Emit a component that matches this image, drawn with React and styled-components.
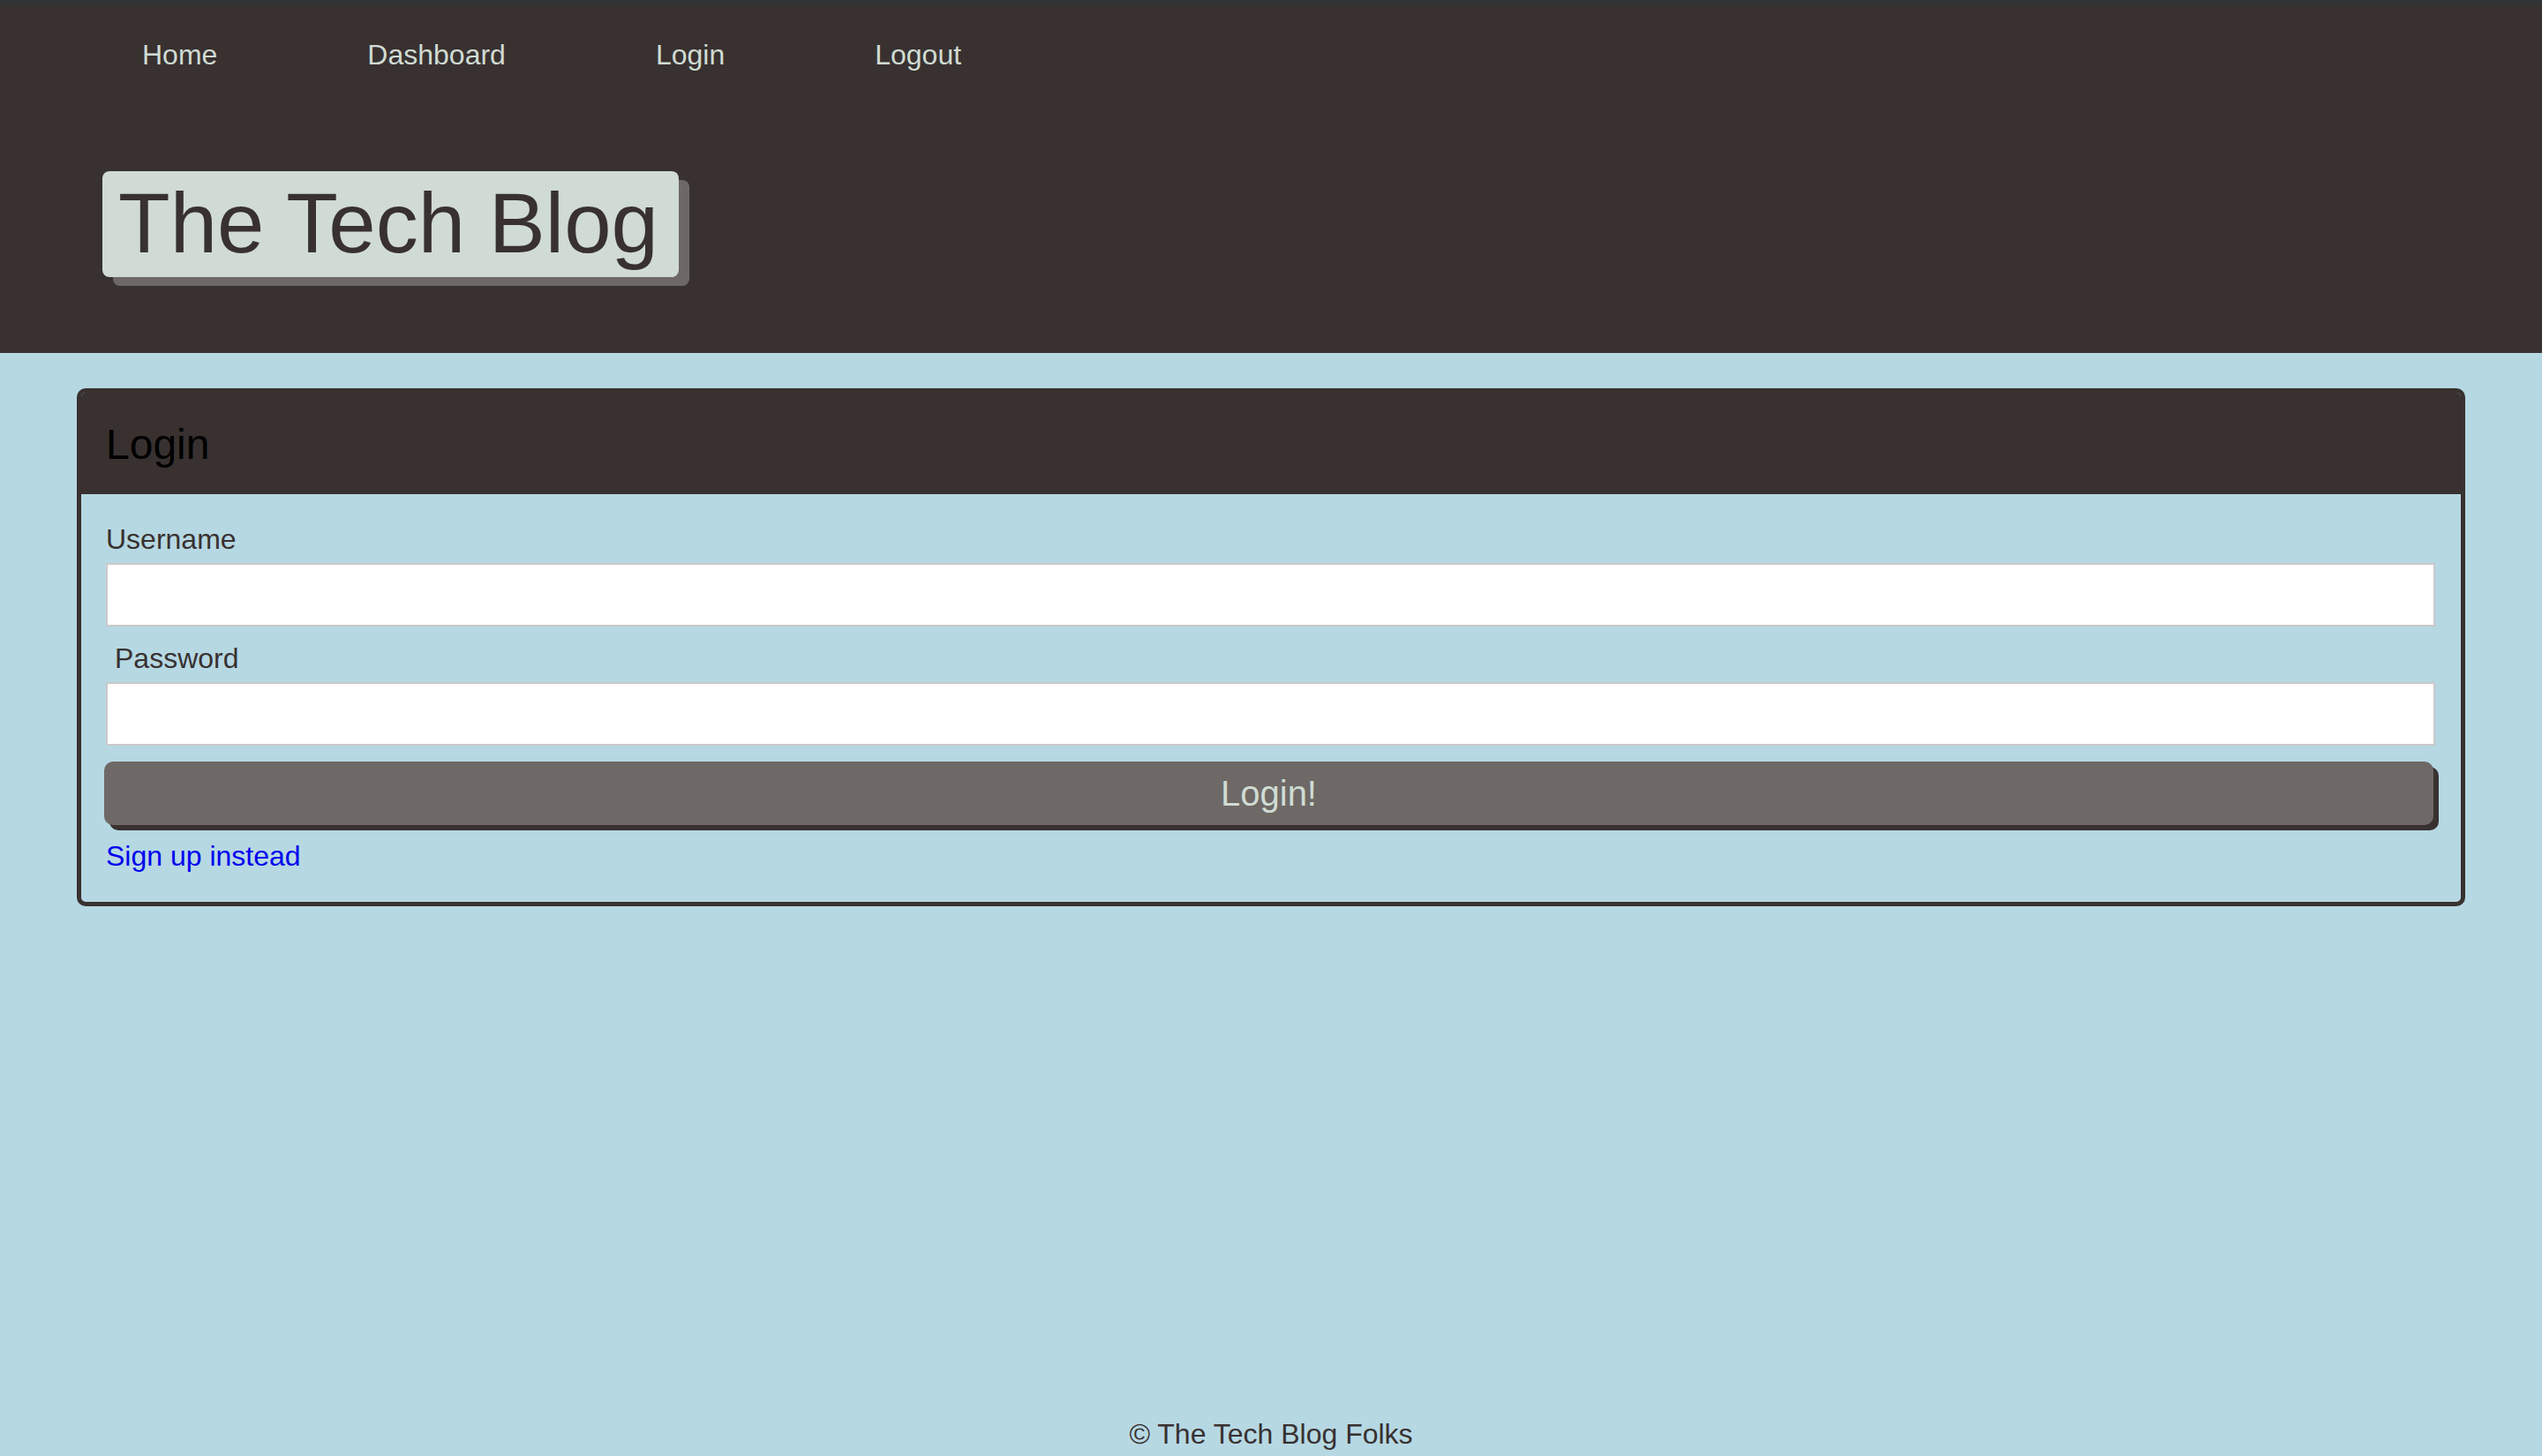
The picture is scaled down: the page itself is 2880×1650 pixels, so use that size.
import React from 'react';
import styled, { createGlobalStyle } from 'styled-components';

const GlobalStyle = createGlobalStyle`
  html, body {
    margin: 0;
    padding: 0;
    background-color: #b6d8e3;
    font-family: "Liberation Sans", Arial, Helvetica, sans-serif;
    color: #383130;
  }
  * {
    box-sizing: border-box;
  }
`;

const Page = styled.div`
  min-height: 100vh;
  display: flex;
  flex-direction: column;
`;

const Header = styled.header`
  background-color: #383130;
  border-top: 6px solid #333437;
  padding: 38px 0 86px 116px;
`;

const Nav = styled.nav`
  display: flex;
  gap: 170px;
  padding-left: 45px;
  & a {
    color: #d0dbd3;
    text-decoration: none;
    font-size: 32px;
    line-height: 37px;
  }
`;

const Title = styled.h1`
  display: inline-block;
  margin: 113px 0 0 0;
  padding: 4px 23px 6px 18px;
  background-color: #d0dbd3;
  color: #383130;
  font-size: 96px;
  font-weight: normal;
  line-height: 110px;
  border-radius: 8px;
  box-shadow: 12px 10px 0 #6d6866;
`;

const Main = styled.main`
  flex: 1;
  padding: 40px 87px 0;
`;

const Card = styled.section`
  border: 5px solid #383130;
  border-radius: 10px;
  overflow: hidden;
  & .card__header {
    background-color: #383130;
    color: #000;
    margin: 0;
    padding: 31px 28px 29px;
    font-size: 48px;
    font-weight: normal;
    line-height: 55px;
  }
  & .card__body {
    padding: 33px 29px 33px 28px;
  }
`;

const Label = styled.label`
  display: block;
  font-size: 32px;
  line-height: 37px;
  color: #383130;
  padding-left: ${(props) => (props.indent ? '10px' : '0')};
`;

const Input = styled.input`
  display: block;
  width: 100%;
  height: 72px;
  margin: 8px 0 18px;
  border: 2px solid #c9c9c9;
  background-color: #fff;
  font-size: 32px;
`;

const Button = styled.button`
  display: block;
  width: 100%;
  height: 72px;
  margin: 3px 0 0 -2px;
  border: none;
  border-radius: 10px;
  background-color: #6e6966;
  color: #d0dbd3;
  font-family: "Liberation Sans", Arial, sans-serif;
  font-size: 40px;
  box-shadow: 6px 6px 0 #383130;
  cursor: pointer;
`;

const SignUp = styled.a`
  display: inline-block;
  margin-top: 17px;
  color: #0000ee;
  text-decoration: none;
  font-size: 32px;
  line-height: 37px;
`;

const Footer = styled.footer`
  text-align: center;
  font-size: 32px;
  line-height: 37px;
  padding-bottom: 6px;
  color: #383130;
`;

const App = () => {
  return (
    <Page>
      <GlobalStyle />
      <Header>
        <Nav>
          <a href="#">Home</a>
          <a href="#">Dashboard</a>
          <a href="#">Login</a>
          <a href="#">Logout</a>
        </Nav>
        <Title>The Tech Blog</Title>
      </Header>
      <Main>
        <Card>
          <h2 className="card__header">Login</h2>
          <form className="card__body" onSubmit={(e) => e.preventDefault()}>
            <Label htmlFor="username">Username</Label>
            <Input id="username" type="text" />
            <Label htmlFor="password" indent>Password</Label>
            <Input id="password" type="password" />
            <Button type="submit">Login!</Button>
            <SignUp href="#">Sign up instead</SignUp>
          </form>
        </Card>
      </Main>
      <Footer>© The Tech Blog Folks</Footer>
    </Page>
  );
};

export default App;
